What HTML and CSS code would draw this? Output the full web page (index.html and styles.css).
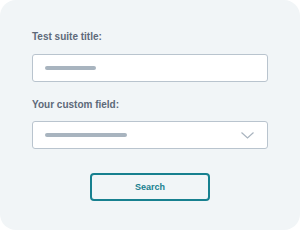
FILE: index.html
```html
<!DOCTYPE html>
<html>
<head>
<meta charset="utf-8">
<link rel="stylesheet" href="styles.css">
</head>
<body>
<div class="card">
  <label class="label">Test suite title:</label>
  <div class="field"><span class="ph ph-short"></span></div>
  <label class="label label-2">Your custom field:</label>
  <div class="field select"><span class="ph ph-long"></span>
    <svg class="chev" width="13" height="7" viewBox="0 0 13 7"><path d="M0.5 0.5 L6.5 6 L12.5 0.5" fill="none" stroke="#a9b4bf" stroke-width="1.2"/></svg>
  </div>
  <div class="actions"><button class="btn">Search</button></div>
</div>
</body>
</html>
```
FILE: styles.css
```css
html, body { margin: 0; padding: 0; background: #ffffff; }
.card {
  width: 300px; height: 230px; box-sizing: border-box;
  background: #f1f5f7; border-radius: 16px;
  padding: 31px 32px 0 32px;
  display: flex; flex-direction: column;
  font-family: "Liberation Sans", Arial, sans-serif;
}
.label {
  display: block; font-size: 10px; line-height: 12px; font-weight: 700;
  color: #5d6979; margin-bottom: 11px;
}
.label-2 { margin-top: 17px; margin-bottom: 10px; }
.field {
  height: 28px; box-sizing: border-box; background: #fff;
  border: 1px solid #b9c4ce; border-radius: 3px;
  display: flex; align-items: center; padding-left: 12px; padding-right: 13px;
}
.ph { display: block; height: 4px; border-radius: 2px; background: #a8b4bf; }
.ph-short { width: 51px; }
.ph-long { width: 82px; }
.select { justify-content: space-between; }
.chev { display: block; margin-top: 1px; }
.actions { display: flex; justify-content: center; margin-top: 24px; }
.btn {
  width: 120px; height: 28px; box-sizing: border-box;
  border: 2px solid #17808f; border-radius: 4px; background: transparent;
  color: #17808f; font-family: "Liberation Sans", Arial, sans-serif;
  font-size: 9px; font-weight: 700; padding: 0; cursor: pointer;
}
```
